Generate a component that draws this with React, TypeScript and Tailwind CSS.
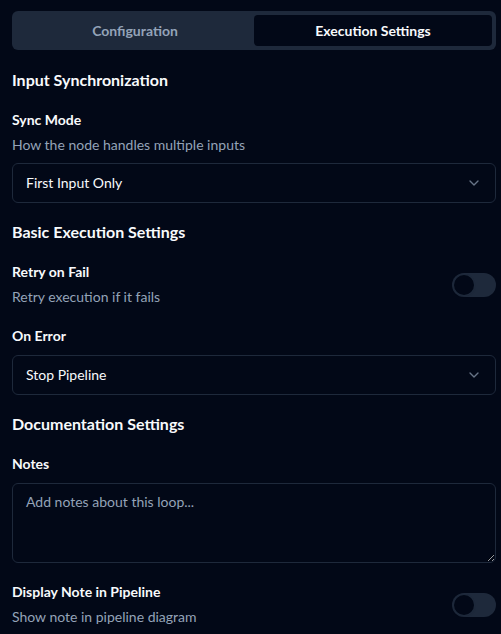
import React, { useState } from 'react';
import { ChevronDown } from 'lucide-react';

const font = { fontFamily: 'Lato, "Noto Sans", sans-serif' };

const Toggle = ({ on, onChange }: { on: boolean; onChange: () => void }) => (
  <button
    onClick={onChange}
    className={`relative inline-flex h-6 w-11 shrink-0 items-center rounded-full border-2 border-transparent transition-colors ${on ? 'bg-[#f8fafc]' : 'bg-[#1e293b]'}`}
  >
    <span
      className={`block h-5 w-5 rounded-full bg-[#020817] shadow ring-1 ring-[#1e293b] transition-transform ${on ? 'translate-x-5' : 'translate-x-0'}`}
    />
  </button>
);

const Select = ({ value }: { value: string }) => (
  <div className="flex h-10 w-full items-center justify-between rounded-md border border-[#1e293b] bg-[#020817] px-[13px] text-sm text-[#f8fafc]">
    <span>{value}</span>
    <ChevronDown size={16} className="text-[#94a3b8] opacity-70" />
  </div>
);

export default function App() {
  const [tab, setTab] = useState('exec');
  const [retry, setRetry] = useState(false);
  const [showNote, setShowNote] = useState(false);

  return (
    <div style={font} className="min-h-[634px] w-full bg-[#020817] pl-3 pr-[5px] pt-[11px] text-[#f8fafc] antialiased">
      <div className="grid h-[39px] grid-cols-2 items-center rounded-md bg-[#1e293b] p-1 text-sm font-bold">
        <button
          onClick={() => setTab('config')}
          className={`h-[31px] rounded-sm ${tab === 'config' ? 'bg-[#020817] text-[#f8fafc]' : 'text-[#94a3b8]'}`}
        >
          Configuration
        </button>
        <button
          onClick={() => setTab('exec')}
          className={`h-[31px] rounded-sm ${tab === 'exec' ? 'bg-[#020817] text-[#f8fafc]' : 'text-[#94a3b8]'}`}
        >
          Execution Settings
        </button>
      </div>

      <h3 className="mt-[18px] text-base font-bold leading-6">Input Synchronization</h3>

      <div className="mt-[18px]">
        <div className="text-sm font-bold leading-5">Sync Mode</div>
        <p className="mt-[5px] text-sm leading-5 text-[#94a3b8]">How the node handles multiple inputs</p>
        <div className="mt-2">
          <Select value="First Input Only" />
        </div>
      </div>

      <h3 className="mt-[17px] text-base font-bold leading-6">Basic Execution Settings</h3>

      <div className="mt-[18px] flex items-center justify-between">
        <div>
          <div className="text-sm font-bold leading-5">Retry on Fail</div>
          <p className="mt-[5px] text-sm leading-5 text-[#94a3b8]">Retry execution if it fails</p>
        </div>
        <Toggle on={retry} onChange={() => setRetry(!retry)} />
      </div>

      <div className="mt-[19px]">
        <div className="text-sm font-bold leading-5">On Error</div>
        <div className="mt-[9px]">
          <Select value="Stop Pipeline" />
        </div>
      </div>

      <h3 className="mt-[17px] text-base font-bold leading-6">Documentation Settings</h3>

      <div className="mt-[18px]">
        <div className="text-sm font-bold leading-5">Notes</div>
        <textarea
          placeholder="Add notes about this loop..."
          className="mt-[9px] block h-20 w-full rounded-md border border-[#1e293b] bg-[#020817] px-[13px] py-2 text-sm text-[#f8fafc] placeholder:text-[#94a3b8] focus:outline-none"
        />
      </div>

      <div className="mt-[19px] flex items-center justify-between">
        <div>
          <div className="text-sm font-bold leading-5">Display Note in Pipeline</div>
          <p className="mt-[5px] text-sm leading-5 text-[#94a3b8]">Show note in pipeline diagram</p>
        </div>
        <Toggle on={showNote} onChange={() => setShowNote(!showNote)} />
      </div>
    </div>
  );
}
